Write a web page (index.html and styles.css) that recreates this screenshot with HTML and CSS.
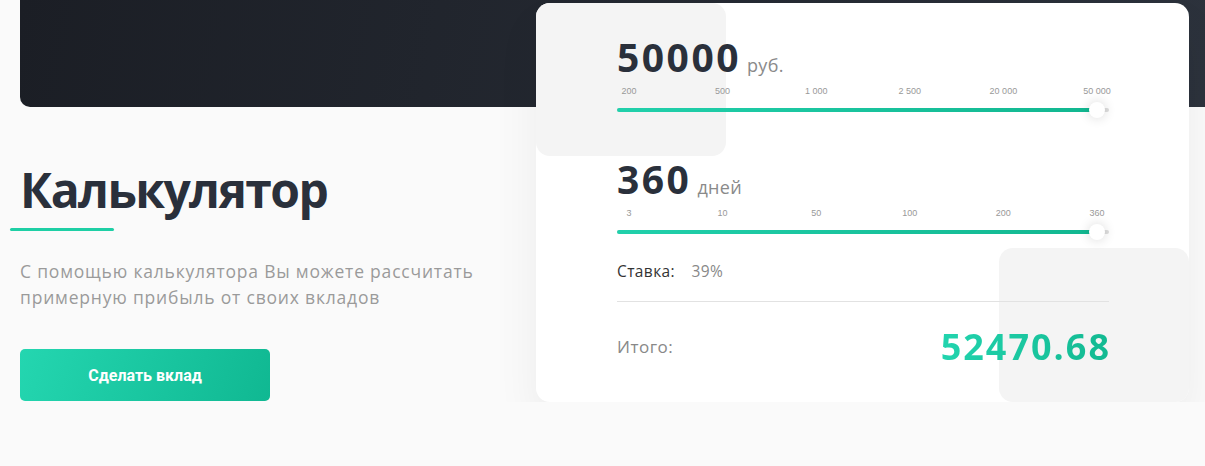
FILE: index.html
```html
<!DOCTYPE html>
<html lang="ru">
<head>
  <meta charset="UTF-8">
  <meta name="viewport" content="width=device-width, initial-scale=1.0">
  <title>Калькулятор вкладов</title>
  <link rel="stylesheet" href="styles.css">
</head>
<body>
  <div class="hero"></div>

  <div class="calc">
    <div class="calc-info">
      <h2 class="calc-title">Калькулятор</h2>
      <p class="calc-text">С помощью калькулятора Вы можете рассчитать примерную прибыль от своих вкладов</p>
      <button class="btn">Сделать вклад</button>
    </div>

    <div class="card">
      <div class="card-deco card-deco-top"></div>
      <div class="card-deco card-deco-bottom"></div>

      <div class="field field-sum">
        <div class="field-value">50000 <span class="field-unit">руб.</span></div>
        <div class="ticks">
          <span>200</span><span>500</span><span>1 000</span><span>2 500</span><span>20 000</span><span>50 000</span>
        </div>
        <div class="track">
          <div class="track-fill" style="width: 97.6%"></div>
          <div class="thumb" style="left: 97.6%"></div>
        </div>
      </div>

      <div class="field field-days">
        <div class="field-value">360 <span class="field-unit">дней</span></div>
        <div class="ticks">
          <span>3</span><span>10</span><span>50</span><span>100</span><span>200</span><span>360</span>
        </div>
        <div class="track">
          <div class="track-fill" style="width: 97.6%"></div>
          <div class="thumb" style="left: 97.6%"></div>
        </div>
      </div>

      <div class="rate">
        <span class="rate-label">Ставка:</span>
        <span class="rate-value">39%</span>
      </div>

      <div class="total">
        <span class="total-label">Итого:</span>
        <span class="total-value">52470.68</span>
      </div>
    </div>
  </div>
</body>
</html>
```

FILE: styles.css
```css
body {
  margin: 0;
  background: #fafafa;
  font-family: 'Open Sans', 'Noto Sans', Arial, sans-serif;
  color: #2a303b;
  overflow: hidden;
}
.hero {
  height: 107px;
  margin-left: 20px;
  border-bottom-left-radius: 10px;
  background: linear-gradient(100deg, #1b1e25 0%, #2c323c 100%);
}
.calc {
  display: flex;
  margin-top: -104px;
  padding-left: 20px;
}
.calc-info {
  width: 516px;
  padding-top: 157px;
}
.calc-title {
  margin: 0;
  font-size: 48px;
  font-weight: 700;
  line-height: 60px;
  letter-spacing: -1.6px;
  color: #2a303b;
}
.calc-title::after {
  content: '';
  display: block;
  width: 104px;
  height: 3px;
  margin: 8px 0 0 -10px;
  border-radius: 2px;
  background: #1ecfa5;
}
.calc-text {
  margin: 27px 0 0;
  width: 480px;
  font-size: 17.5px;
  line-height: 26px;
  letter-spacing: 0.8px;
  color: #9a9a9a;
}
.btn {
  display: block;
  width: 250px;
  height: 52px;
  margin-top: 39px;
  border: none;
  border-radius: 5px;
  background: linear-gradient(110deg, #24d6b0 0%, #10b892 100%);
  color: #fff;
  font-family: Roboto, Arial, sans-serif;
  font-size: 16px;
  font-weight: 700;
  cursor: pointer;
}
.card {
  position: relative;
  width: 653px;
  height: 399px;
  box-sizing: border-box;
  padding: 32px 80px 0 81px;
  border-radius: 14px;
  background: #fff;
  box-shadow: 0 22px 44px rgba(0, 0, 0, 0.06);
}
.card-deco {
  position: absolute;
  width: 190px;
  height: 153px;
  border-radius: 14px;
  background: #f4f4f4;
}
.card-deco-top {
  top: 0;
  left: 0;
}
.card-deco-bottom {
  right: 0;
  bottom: 0;
  height: 154px;
}
.field {
  position: relative;
}
.field-sum {
  margin-bottom: 45px;
}
.field-days {
  margin-bottom: 27px;
}
.field-value {
  display: flex;
  align-items: baseline;
  gap: 6px;
  height: 44px;
  font-size: 39px;
  font-weight: 700;
  line-height: 44px;
  letter-spacing: 2.5px;
  color: #2a303b;
}
.field-unit {
  font-size: 18px;
  font-weight: 400;
  letter-spacing: 0.3px;
  color: #8a8a8a;
}
.ticks {
  display: flex;
  justify-content: space-between;
  padding: 0 12px;
  margin-top: 5px;
  height: 14px;
  font-family: 'Liberation Sans', Arial, sans-serif;
  font-size: 9px;
  line-height: 14px;
  color: #999;
}
.ticks span {
  display: flex;
  justify-content: center;
  width: 0;
  white-space: nowrap;
}
.track {
  position: relative;
  height: 4px;
  margin-top: 10px;
  border-radius: 2px;
  background: #ddd;
}
.track-fill {
  height: 100%;
  border-radius: 2px;
  background: linear-gradient(90deg, #21d0ab 0%, #12b790 100%);
}
.thumb {
  position: absolute;
  top: 50%;
  width: 16px;
  height: 16px;
  margin: -8px 0 0 -8px;
  border-radius: 50%;
  background: #fff;
  box-shadow: 0 0 12px rgba(0, 0, 0, 0.16);
}
.rate {
  position: relative;
  padding-bottom: 20px;
  border-bottom: 1px solid #e2e2e2;
  font-size: 15.5px;
  line-height: 20px;
  letter-spacing: 0.4px;
}
.rate-label {
  color: #333;
  margin-right: 12px;
}
.rate-value {
  color: #888;
}
.total {
  position: relative;
  display: flex;
  justify-content: space-between;
  align-items: center;
  padding-top: 20px;
}
.total-label {
  font-size: 17px;
  letter-spacing: 0.5px;
  color: #888;
}
.total-value {
  font-size: 36px;
  font-weight: 700;
  letter-spacing: 2px;
  margin-right: -2px;
  background: linear-gradient(90deg, #22d4ae 0%, #12b991 100%);
  -webkit-background-clip: text;
  background-clip: text;
  color: transparent;
}
```
